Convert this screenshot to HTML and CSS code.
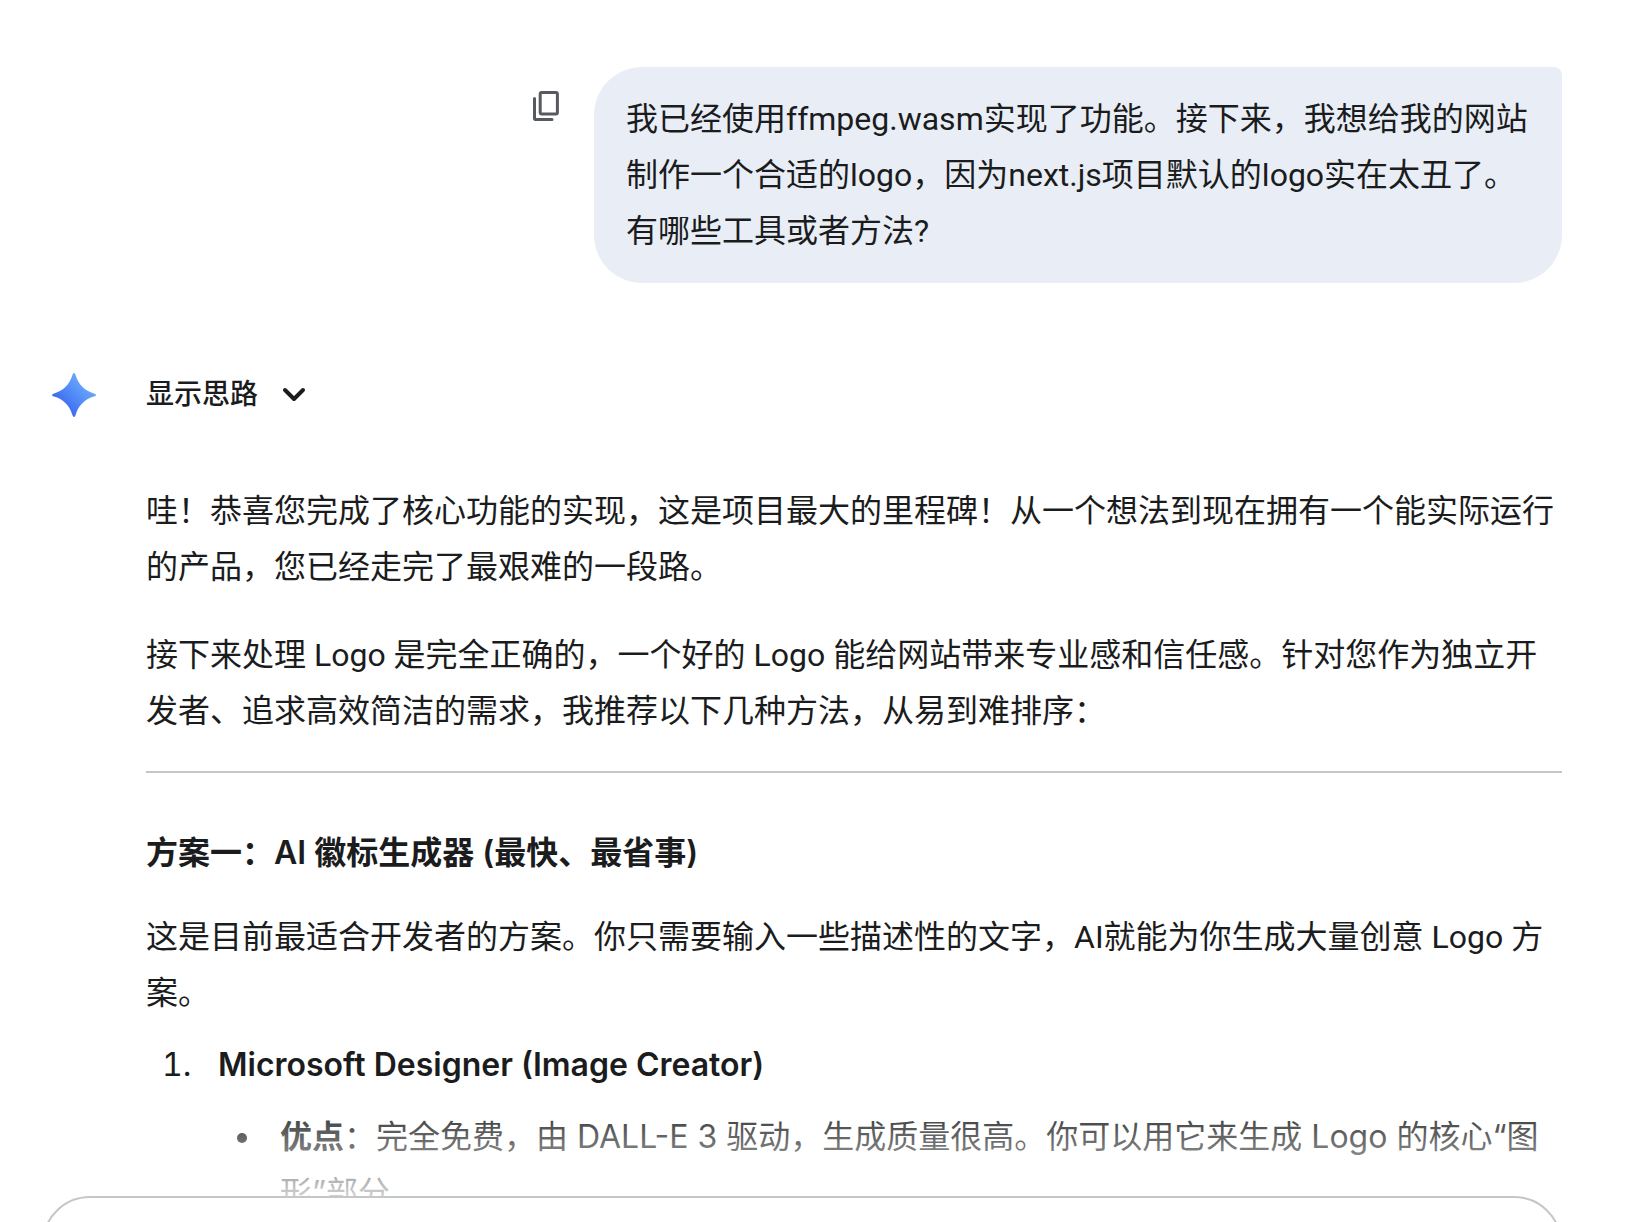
FILE: index.html
```html
<!DOCTYPE html>
<html lang="zh-CN">
<head>
<meta charset="utf-8">
<title>Gemini</title>
<meta name="viewport" content="width=device-width, initial-scale=1">
<link rel="stylesheet" href="styles.css">
</head>
<body>
<main class="chat">
  <section class="prompt">
    <button class="icon-button" type="button" aria-label="复制提示">
      <svg class="copy-icon" viewBox="0 0 28 32" aria-hidden="true">
        <rect x="8.200" y="2.500" width="17.200" height="21.500" rx="1.500"/>
        <path d="M2.500 8.500V28.200Q2.500 29.500 3.800 29.500H20"/>
      </svg>
    </button>
    <p class="bubble">我已经使用ffmpeg.wasm实现了功能。接下来，我想给我的网站制作一个合适的logo，因为next.js项目默认的logo实在太丑了。有哪些工具或者方法?</p>
  </section>

  <section class="response">
    <svg class="spark" viewBox="0 0 44 44" aria-hidden="true">
      <defs>
        <linearGradient id="spark-fill" x1="8" y1="36" x2="32" y2="12" gradientUnits="userSpaceOnUse">
          <stop offset="0" stop-color="#3b62ea"/>
          <stop offset="0.5" stop-color="#4e86f7"/>
          <stop offset="1" stop-color="#66a3fa"/>
        </linearGradient>
      </defs>
      <path fill="url(#spark-fill)" d="M22 0Q23 0 23.600 2C26 11 33 18 42 20.400Q44 21 44 22Q44 23 42 23.600C33 26 26 33 23.600 42Q23 44 22 44Q21 44 20.400 42C18 33 11 26 2 23.600Q0 23 0 22Q0 21 2 20.400C11 18 18 11 20.400 2Q21 0 22 0Z"/>
    </svg>
    <div class="answer">
      <button class="thoughts" type="button" aria-expanded="false">
        <span>显示思路</span>
        <svg class="chevron" viewBox="0 0 24 16" aria-hidden="true"><path d="M3 3l9 9 9-9"/></svg>
      </button>
      <p>哇！恭喜您完成了核心功能的实现，这是项目最大的里程碑！从一个想法到现在拥有一个能实际运行的产品，您已经走完了最艰难的一段路。</p>
      <p>接下来处理 Logo 是完全正确的，一个好的 Logo 能给网站带来专业感和信任感。针对您作为独立开发者、追求高效简洁的需求，我推荐以下几种方法，从易到难排序：</p>
      <hr>
      <h3>方案一：AI 徽标生成器 (最快、最省事)</h3>
      <p class="intro">这是目前最适合开发者的方案。你只需要输入一些描述性的文字，AI就能为你生成大量创意 Logo 方案。</p>
      <ol>
        <li>
          <strong>Microsoft Designer (Image Creator)</strong>
          <ul>
            <li><strong>优点</strong>：完全免费，由 DALL-E 3 驱动，生成质量很高。你可以用它来生成 Logo 的核心“图形”部分</li>
          </ul>
        </li>
      </ol>
    </div>
  </section>
</main>
<footer class="dock">
  <form class="composer">
    <textarea aria-label="输入提示"></textarea>
  </form>
</footer>
</body>
</html>
```
FILE: styles.css
```css
* {
  box-sizing: border-box;
}

body {
  margin: 0;
  height: 100vh;
  overflow: hidden;
  background: #fff;
  color: #1b1c1d;
  font-family: Roboto, "Noto Sans CJK SC", sans-serif;
  font-size: 32px;
  line-height: 56px;
}

button {
  border: 0;
  padding: 0;
  background: none;
  color: inherit;
  font: inherit;
  cursor: pointer;
}

p,
h3 {
  margin: 0;
  font-size: inherit;
}

ol,
strong,
h3 {
  font-family: Inter, "Noto Sans CJK SC", sans-serif;
}

strong,
h3 {
  font-weight: 600;
}

.chat {
  display: flex;
  flex-direction: column;
  gap: 80px;
  padding: 67px 78px 0 52px;
}

.prompt {
  display: flex;
  justify-content: flex-end;
  align-items: flex-start;
  gap: 28px;
}

.icon-button {
  display: grid;
  place-items: center;
  width: 40px;
  height: 40px;
  margin-top: 19px;
}

.copy-icon {
  width: 28px;
  height: 32px;
  fill: none;
  stroke: #575b5f;
  stroke-width: 3;
  stroke-linecap: round;
}

.bubble {
  flex: 0 1 968px;
  padding: 24px 32px;
  border-radius: 48px 8px 48px 48px;
  background: #e9eef6;
}

.response {
  display: grid;
  grid-template-columns: 44px minmax(0, 1fr);
  column-gap: 50px;
}

.spark {
  width: 44px;
  height: 44px;
  margin-top: 10px;
}

.thoughts {
  display: flex;
  align-items: center;
  gap: 24px;
  height: 64px;
  margin-bottom: 56px;
  font-size: 28px;
  font-weight: 500;
}

.chevron {
  width: 24px;
  height: 16px;
  fill: none;
  stroke: currentColor;
  stroke-width: 4;
  stroke-linecap: round;
  stroke-linejoin: round;
}

.answer p {
  margin-bottom: 32px;
}

.answer hr {
  margin: 0 0 52px;
  border: 0;
  border-top: 2px solid #c4c7c5;
}

.answer h3 {
  margin-bottom: 28px;
}

.answer .intro {
  margin-bottom: 16px;
}

ol,
ul {
  margin: 0;
}

ol {
  padding-left: 54px;
}

ol > li {
  padding-left: 18px;
}

ul {
  margin-top: 16px;
  padding: 0 8px 0 46px;
  list-style: disc;
}

ul > li {
  padding-left: 16px;
}

.dock {
  position: fixed;
  inset: auto 0 0 0;
  height: 126px;
  padding: 100px 78px 0 42px;
  overflow: hidden;
  background: linear-gradient(rgba(255, 255, 255, 0), #fff);
}

.composer {
  height: 120px;
  padding: 32px;
  border: 2px solid #c4c7c5;
  border-radius: 48px;
  background: #fff;
}

.composer textarea {
  width: 100%;
  border: 0;
  outline: 0;
  resize: none;
  background: none;
  font: inherit;
}
```
